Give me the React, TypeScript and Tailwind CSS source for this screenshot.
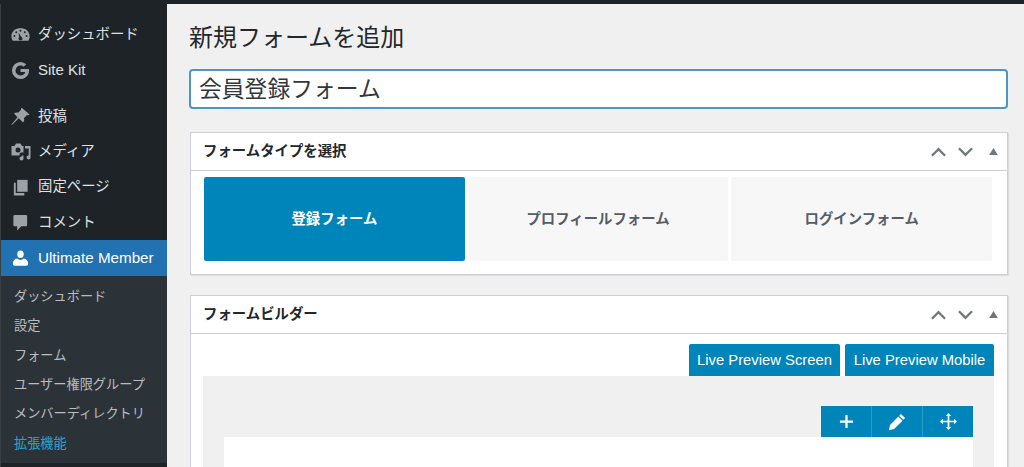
const font = { fontFamily: '"Liberation Sans", "Noto Sans CJK JP", sans-serif' };

const ic = "w-[19px] h-[19px] shrink-0 fill-[#9ca2a7]";

function Gauge() {
  return (
    <svg viewBox="0 0 20 20" className={ic}>
      <path fillRule="evenodd" d="M10 3.200c-5 0-9.600 3.700-9.600 8.800 0 1.700.5 3.200 1.400 4.500h16.400c.9-1.300 1.400-2.800 1.400-4.500 0-5.100-4.600-8.800-9.600-8.800zM10 5a1 1 0 110 2 1 1 0 010-2zM5.500 6.600a1 1 0 110 2 1 1 0 010-2zm9 0a1 1 0 110 2 1 1 0 010-2zM3.600 10.600a1 1 0 110 2 1 1 0 010-2zm12.800 0a1 1 0 110 2 1 1 0 010-2zM8 8l2.800 4.600c.8.300 1.300 1 1.300 1.800 0 1-.9 1.600-2.100 1.600s-2.100-.7-2.100-1.600c0-.6.3-1.200.8-1.500z" />
    </svg>
  );
}
function GLogo() {
  return (
    <svg viewBox="0 0 20 20" className={ic}>
      <path d="M18.800 8.300H10v3.400h5c-.5 2.200-2.600 3.600-5 3.600a5.300 5.300 0 010-10.600c1.300 0 2.500.5 3.400 1.300l2.600-2.500A9 9 0 0010 1a9 9 0 100 18c4.500 0 9-3.200 9-9 0-.6-.1-1.200-.2-1.700z" />
    </svg>
  );
}
function Pin() {
  return (
    <svg viewBox="0 0 20 20" className={ic}>
      <path d="M11.600 1l8 7c-.8.800-1.900 1-3 .6l-3 3.200c.6 1.600.3 3.200-.8 4.400L8.200 11.800 1 19l-.5-.5L6.800 10.900 3.200 6.800c1.200-1.100 2.800-1.400 4.400-.8l3-3c-.4-1-.2-2 1-2z" />
    </svg>
  );
}
function Media() {
  return (
    <svg viewBox="0 0 20 20" className="w-[20px] h-[20px] shrink-0 fill-[#9ca2a7]">
      <path fillRule="evenodd" d="M.5 4h3L5 1.500h4.500L11 4h1.500v6.500H9.800a3 3 0 00-1.300 3H.5zm6.500 1.500a2.500 2.500 0 100 5 2.500 2.500 0 000-5z" />
      <path d="M14 4h5.500v11.500a2 2 0 11-1.800-2V6.500H14z" />
      <path d="M11 13.500h1.500v3a2 2 0 11-2-2z" />
    </svg>
  );
}
function Pages() {
  return (
    <svg viewBox="0 0 20 20" className={ic}>
      <path d="M6.500 2H17.500v12.500H6.500z" />
      <path d="M3 5h2v10.800h9V18.500H3z" />
    </svg>
  );
}
function Comment() {
  return (
    <svg viewBox="0 0 20 20" className={ic}>
      <path d="M4 2h11.500A1.500 1.500 0 0117 3.500v9a1.500 1.500 0 01-1.500 1.500H11l-4.500 4.500V14H4A1.500 1.500 0 012.500 12.500v-9A1.500 1.500 0 014 2z" />
    </svg>
  );
}
function User() {
  return (
    <svg viewBox="0 0 20 20" className="w-[19px] h-[19px] shrink-0 fill-white">
      <ellipse cx="10" cy="5.500" rx="3.400" ry="3.800" />
      <path d="M2 15.500c0-3 1.500-5 4.500-5.500 1 1 2 1.500 3.500 1.500s2.500-.5 3.500-1.500c3 .5 4.500 2.500 4.500 5.500 0 1.200-.8 2-2 2H4c-1.200 0-2-.8-2-2z" />
    </svg>
  );
}

function MenuItem({ icon, label, className = "" }: { icon: React.ReactNode; label: string; className?: string }) {
  return (
    <div className={`flex items-center h-[35.400px] pl-[10px] text-[14.400px] text-[#dfe1e3] ${className}`}>
      <span className="w-[27px] shrink-0 flex items-center">{icon}</span>
      <span>{label}</span>
    </div>
  );
}

function Sidebar() {
  const subs = ["ダッシュボード", "設定", "フォーム", "ユーザー権限グループ", "メンバーディレクトリ"];
  return (
    <aside className="w-[167px] shrink-0 h-full bg-[#1d2327] border-l border-[#3a3f44] flex flex-col pt-[13px]">
      <MenuItem icon={<Gauge />} label="ダッシュボード" />
      <MenuItem icon={<GLogo />} label="Site Kit" className="mb-[11px] !text-[15px]" />
      <MenuItem icon={<Pin />} label="投稿" />
      <MenuItem icon={<Media />} label="メディア" />
      <MenuItem icon={<Pages />} label="固定ページ" />
      <MenuItem icon={<Comment />} label="コメント" />
      <div className="flex items-center h-[36px] pl-[10px] bg-[#2271b1] text-white text-[15.200px]">
        <span className="w-[27px] shrink-0 flex items-center"><User /></span>
        <span>Ultimate Member</span>
      </div>
      <div className="bg-[#2c3338] pt-[6px] pb-[5px] text-[13.200px] text-[#b9bdc0]">
        {subs.map((s) => (
          <div key={s} className="h-[29.300px] flex items-center pl-[13px]">{s}</div>
        ))}
        <div className="h-[29.300px] flex items-center pl-[13px] text-[#2ea2cc]">拡張機能</div>
      </div>
    </aside>
  );
}

function Handles() {
  return (
    <div className="flex items-center gap-[12px] pr-[9px]">
      <svg viewBox="0 0 16 10" className="w-[15px] h-[10px] fill-none stroke-[#72777c] stroke-[2.500]"><path d="M1 9l7-7 7 7" /></svg>
      <svg viewBox="0 0 16 10" className="w-[15px] h-[10px] fill-none stroke-[#72777c] stroke-[2.500]"><path d="M1 1l7 7 7-7" /></svg>
      <svg viewBox="0 0 10 8" className="w-[9px] h-[7px] ml-[4px] fill-[#72777c]"><path d="M5 0l5 8H0z" /></svg>
    </div>
  );
}

function BoxHeader({ title }: { title: string }) {
  return (
    <div className="h-[38px] shrink-0 flex items-center justify-between pl-[12px] border-b border-[#ccd0d4]">
      <span className="text-[14.400px] font-bold text-[#23282d]">{title}</span>
      <Handles />
    </div>
  );
}

function Tab({ label, active }: { label: string; active?: boolean }) {
  return (
    <div className={`flex-1 flex items-center justify-center pt-[2px] text-[14.400px] font-bold rounded-[2px] ${active ? "bg-[#0085ba] text-white" : "bg-[#f7f7f7] text-[#555d66]"}`}>
      {label}
    </div>
  );
}

function BlueBtn({ label, w }: { label: string; w: string }) {
  return (
    <div className={`${w} h-[32px] flex items-center justify-center pt-[1px] bg-[#0085ba] text-white text-[14.800px] rounded-t-[2px]`}>
      {label}
    </div>
  );
}

export default function App() {
  return (
    <div style={font} className="w-[1024px] h-[467px] overflow-hidden flex flex-col bg-[#f0f0f0]">
      <div className="h-[4px] shrink-0 bg-[#1d2327]" />
      <div className="flex flex-1 min-h-0">
        <Sidebar />
        <main className="flex-1 min-w-0 pl-[23px] pr-[16px]">
          <h1 className="text-[24px] leading-[32px] -ml-[1px] text-[#23282d] mt-[18px]">新規フォームを追加</h1>
          <div className="mt-[15px] -ml-[1px] h-[40px] bg-white border-2 border-[#4f94c4] rounded-[4px] flex items-center pl-[8px] text-[22.800px] text-[#32373c]">
            会員登録フォーム
          </div>
          <section className="mt-[23px] w-[818px] h-[143px] bg-white border border-[#ccd0d4] shadow-[1px_1px_1px_rgba(0,0,0,0.08)] flex flex-col">
            <BoxHeader title="フォームタイプを選択" />
            <div className="flex gap-[3px] h-[84px] mt-[6px] ml-[13px] mr-[15px]">
              <Tab label="登録フォーム" active />
              <Tab label="プロフィールフォーム" />
              <Tab label="ログインフォーム" />
            </div>
          </section>
          <section className="mt-[20px] w-[818px] h-[200px] bg-white border border-[#ccd0d4] shadow-[1px_1px_1px_rgba(0,0,0,0.08)] flex flex-col">
            <BoxHeader title="フォームビルダー" />
            <div className="flex justify-end gap-[5px] mt-[10px] mr-[13px]">
              <BlueBtn label="Live Preview Screen" w="w-[151px]" />
              <BlueBtn label="Live Preview Mobile" w="w-[149px]" />
            </div>
            <div className="ml-[12px] mr-[13px] flex-1 bg-[#f0f0f0] pt-[30px] px-[21px]">
              <div className="flex justify-end">
                <div className="flex h-[31px] w-[152px] bg-[#0085ba] text-white divide-x divide-[#2a9cc8]">
                  <div className="flex-1 flex items-center justify-center">
                    <svg viewBox="0 0 16 16" className="w-[15px] h-[15px] fill-white"><path d="M6.800 1h2.400v5.800H15v2.400H9.200V15H6.800V9.200H1V6.800h5.800z" /></svg>
                  </div>
                  <div className="flex-1 flex items-center justify-center">
                    <svg viewBox="0 0 16 16" className="w-[18px] h-[18px] fill-white"><path d="M11.500.8l3.700 3.700-1.600 1.600-3.700-3.700zM9.200 3.100l3.700 3.700-7.500 7.500-4.600 1 1-4.700z" /></svg>
                  </div>
                  <div className="flex-1 flex items-center justify-center">
                    <svg viewBox="0 0 16 16" className="w-[17px] h-[17px] fill-white"><path d="M8 0l2.500 2.800H8.800v4.400h4.400V5.500L16 8l-2.800 2.500V8.800H8.800v4.400h1.700L8 16l-2.500-2.800h1.700V8.800H2.800v1.700L0 8l2.800-2.500v1.700h4.400V2.800H5.500z" /></svg>
                  </div>
                </div>
              </div>
              <div className="bg-white h-[40px]" />
            </div>
          </section>
        </main>
      </div>
    </div>
  );
}
